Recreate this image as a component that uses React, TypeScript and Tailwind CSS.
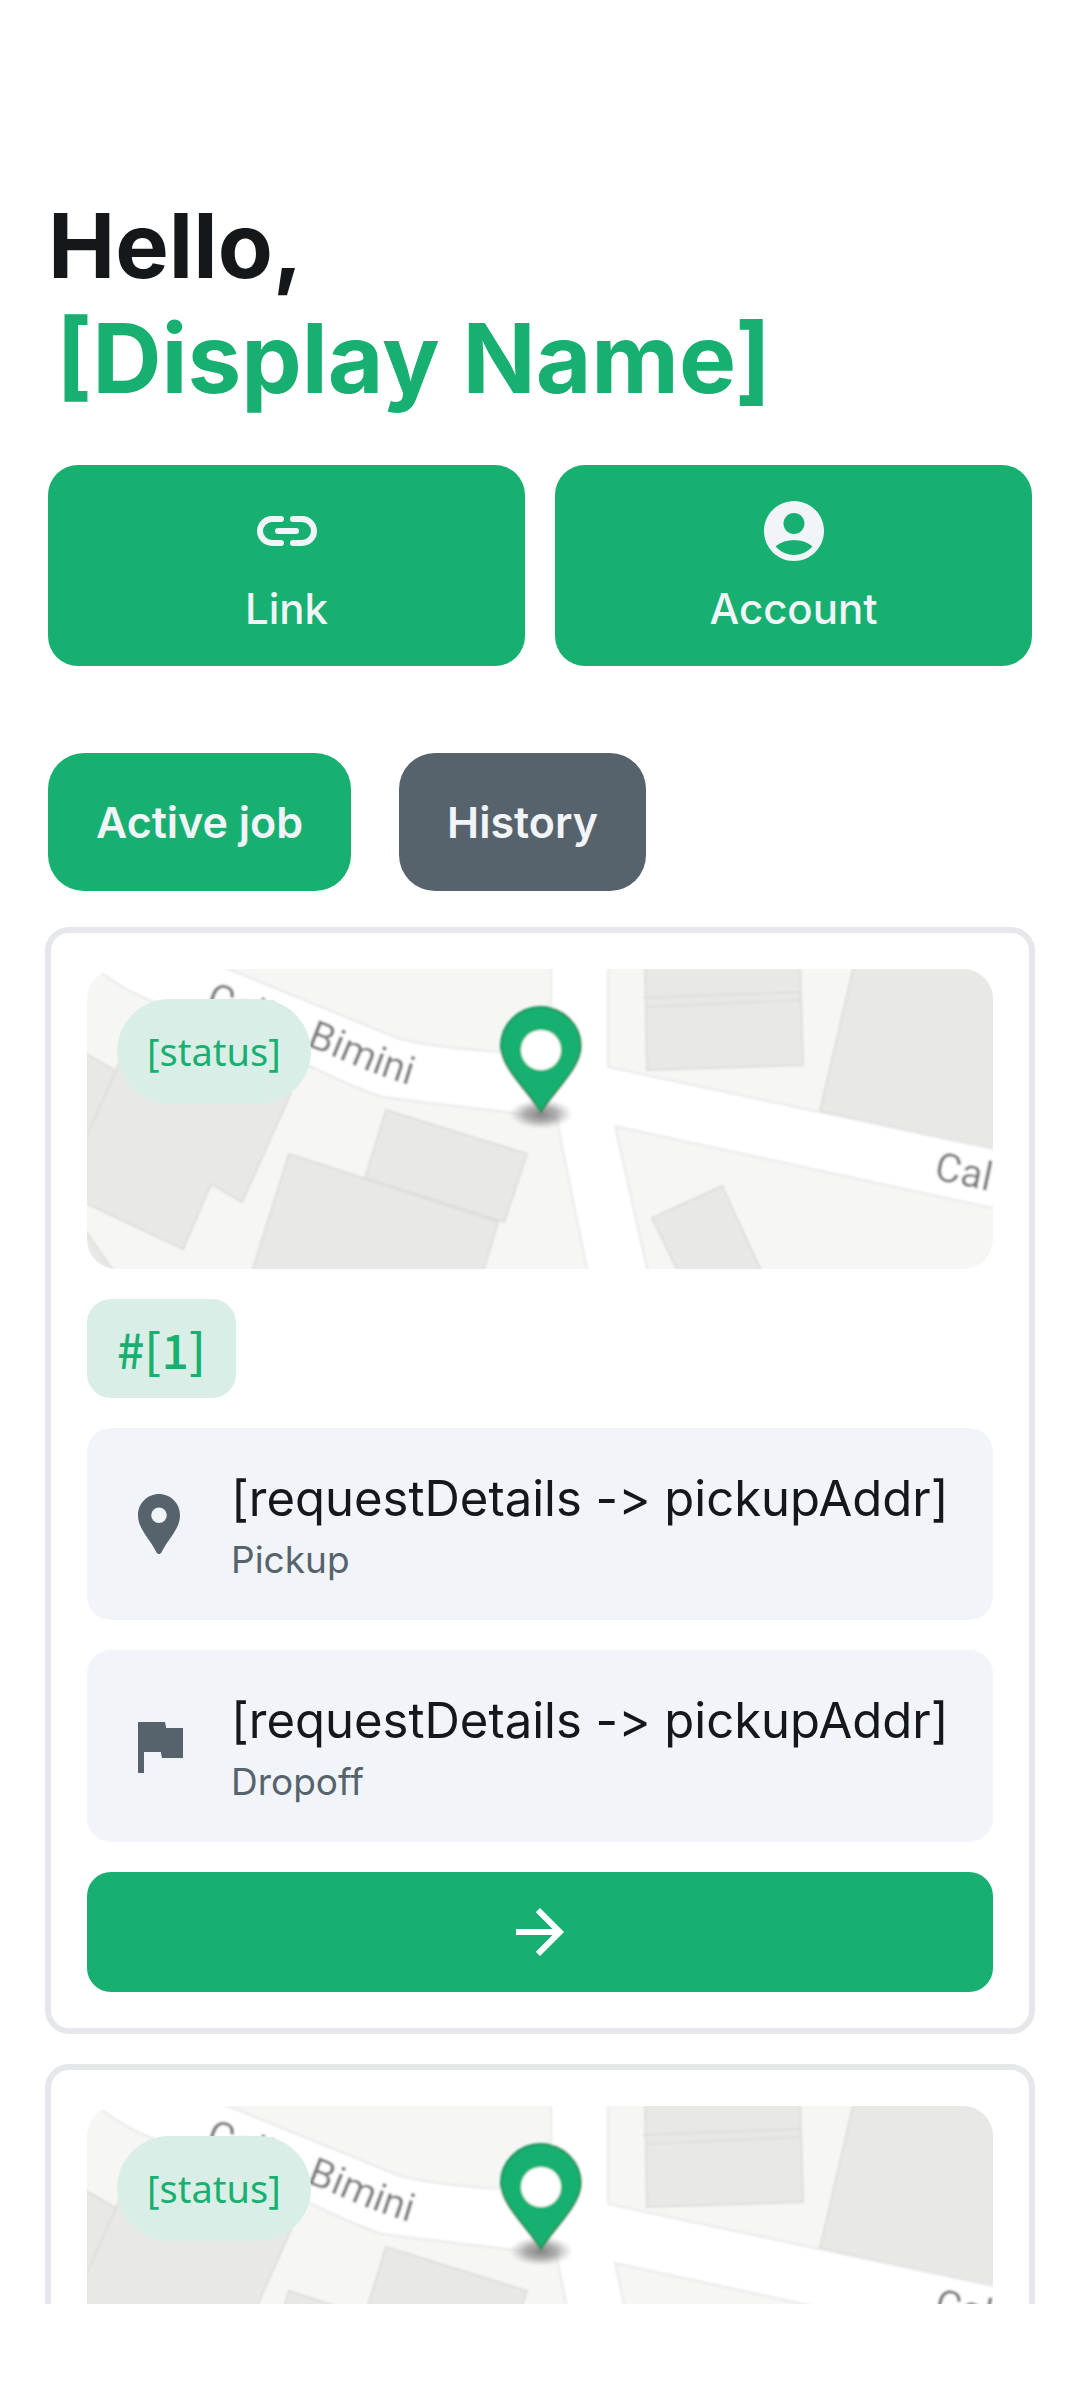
import React from 'react';
import { MdAccountCircle, MdArrowForward, MdFlag } from 'react-icons/md';

function LinkIcon() {
  return (
    <svg viewBox="0 0 24 24" className="size-18" fill="none" stroke="currentColor" strokeWidth="2" strokeLinecap="round" aria-hidden="true">
      <path d="M10 8H7a4 4 0 0 0 0 8h3M14 8h3a4 4 0 0 1 0 8h-3M9 12h6" />
    </svg>
  );
}

function PinIcon() {
  return (
    <svg viewBox="0 0 24 24" className="size-18" fill="currentColor" aria-hidden="true">
      <path d="M12 2C8.13 2 5 5.13 5 9c0 4.6 3.7 7.6 6.2 12.5.35.66 1.25.66 1.6 0C15.3 16.6 19 13.6 19 9c0-3.87-3.13-7-7-7zm0 9.7a2.6 2.6 0 1 1 0-5.2 2.6 2.6 0 0 1 0 5.2z" />
    </svg>
  );
}

function MapPreview({ id }: { id: string }) {
  return (
    <svg viewBox="0 0 906 300" preserveAspectRatio="xMidYMid slice" className="block h-[300px] w-full rounded-[30px]" role="img" aria-label="Map of the job location">
      <defs>
        <radialGradient id={`${id}-shadow`}>
          <stop offset="0" stopColor="#777" stopOpacity="0.9" />
          <stop offset="0.5" stopColor="#888" stopOpacity="0.65" />
          <stop offset="1" stopColor="#aaa" stopOpacity="0" />
        </radialGradient>
        <filter id={`${id}-soft`} x="-10%" y="-10%" width="120%" height="120%">
          <feGaussianBlur stdDeviation="0.8" />
        </filter>
        <path id={`${id}-street`} d="M117 39 Q220 76 262 94 T345 122" />
      </defs>
      <rect width="906" height="300" fill="#f6f6f4" />
      <g filter={`url(#${id}-soft)`}>
        <g fill="#e8e8e6" stroke="#dededc" strokeWidth="2">
          <path d="M-4 83 29 102-4 176z" />
          <path d="M29 102 52 50 204 124 155 233 124 215 96 280-4 233V176z" />
          <path d="M-4 258 29 306H-4z" />
          <path d="M299 141 440 185 417 253 278 209z" />
          <path d="M202 185 411 253 395 306H164z" />
          <path d="M558-4H713L716 96 560 101z" />
          <path d="M556 29 603 27 713 23M558 38 603 36 714 31" fill="none" />
          <path d="M767-4H910V181L733 142z" />
          <path d="M635 217 676 306H593L565 249z" />
        </g>
        <path
          d="M-22-20 15 4Q40 23 70 34L225 98Q270 120 296 128 350 135 420 143L470 149Q472 165 501 304H561L528 157 910 240V181L521 98V-10H464V88L413 83Q340 78 310 69L136-2 100-20z"
          fill="#fff"
          stroke="#e6ebe9"
          strokeWidth="2"
        />
        <g fill="#7c7c7a" fontFamily="Roboto, 'Noto Sans', sans-serif" fontSize="40">
          <text>
            <textPath href={`#${id}-street`}>Calle&nbsp; Bimini</textPath>
          </text>
          <text x="846" y="210" transform="rotate(12 846 210)">Cal</text>
        </g>
        <ellipse cx="454" cy="145" rx="32" ry="15" fill={`url(#${id}-shadow)`} />
        <path
          d="M454 143C440 121 414 99 414 77A40 39 0 0 1 494 77C494 99 468 121 454 143z"
          fill="#18b070"
          stroke="#129158"
          strokeWidth="2"
        />
        <circle cx="454" cy="81" r="20" fill="#fff" />
      </g>
    </svg>
  );
}

function Stop({ icon, address, label }: { icon: React.ReactNode; address: string; label: string }) {
  return (
    <div className="flex items-center gap-9 rounded-3xl bg-[#f1f4f8] px-9 py-[35px]">
      <span className="shrink-0 text-[#57636c]">{icon}</span>
      <div className="min-w-0">
        <p className="text-[49px] leading-[72px] [font-feature-settings:'calt'_0] whitespace-nowrap text-[#14181b]">{address}</p>
        <p className="text-[37px] leading-[50px] text-[#57636c]">{label}</p>
      </div>
    </div>
  );
}

function JobCard({ id }: { id: string }) {
  return (
    <article className="flex shrink-0 flex-col gap-[30px] rounded-3xl border-6 border-[#e5e7eb] p-9">
      <div className="relative">
        <MapPreview id={id} />
        <span className="absolute top-[30px] left-[30px] rounded-full bg-[#d9eee6] px-[30px] font-['Noto_Sans',sans-serif] text-[38px] leading-[105px] text-[#18b070]">
          [status]
        </span>
      </div>
      <span className="self-start rounded-3xl bg-[#d9eee6] px-[30px] font-['Noto_Sans_CJK_SC',sans-serif] text-[48px] leading-[99px] font-medium text-[#18b070]">
        #[1]
      </span>
      <Stop icon={<PinIcon />} address="[requestDetails -> pickupAddr]" label="Pickup" />
      <Stop icon={<MdFlag className="size-18" />} address="[requestDetails -> pickupAddr]" label="Dropoff" />
      <button type="button" aria-label="Open job" className="flex h-30 items-center justify-center rounded-3xl bg-[#18b070] text-white">
        <MdArrowForward className="size-18" />
      </button>
    </article>
  );
}

function ActionButton({ icon, label }: { icon: React.ReactNode; label: string }) {
  return (
    <button type="button" className="flex flex-1 flex-col items-center gap-[15px] rounded-[30px] bg-[#18b070] py-[30px] text-[42px] leading-[54px] font-medium text-[#f1f4f8]">
      {icon}
      {label}
    </button>
  );
}

export default function App() {
  return (
    <main className="flex h-screen flex-col bg-white pb-24 font-['Inter',sans-serif]">
      <h1 className="px-12 pt-48 font-bold">
        <span className="block text-[90px] leading-[108px] text-[#14181b]">Hello,</span>
        <span className="block pl-2 text-[96px] leading-[117px] text-[#18b070]">[Display Name]</span>
      </h1>
      <div className="mt-12 flex gap-[30px] px-12">
        <ActionButton icon={<LinkIcon />} label="Link" />
        <ActionButton icon={<MdAccountCircle className="size-18" />} label="Account" />
      </div>
      <nav className="mt-[87px] flex gap-12 px-12 text-[43px] leading-[54px] font-semibold text-[#f1f4f8]">
        <button type="button" className="rounded-[36px] bg-[#18b070] px-12 py-[42px]">Active job</button>
        <button type="button" className="rounded-[36px] bg-[#57636c] px-12 py-[42px]">History</button>
      </nav>
      <section className="mt-9 flex min-h-0 flex-1 flex-col gap-[30px] overflow-y-auto px-[45px] [scrollbar-width:none]">
        <JobCard id="job-a" />
        <JobCard id="job-b" />
      </section>
    </main>
  );
}
